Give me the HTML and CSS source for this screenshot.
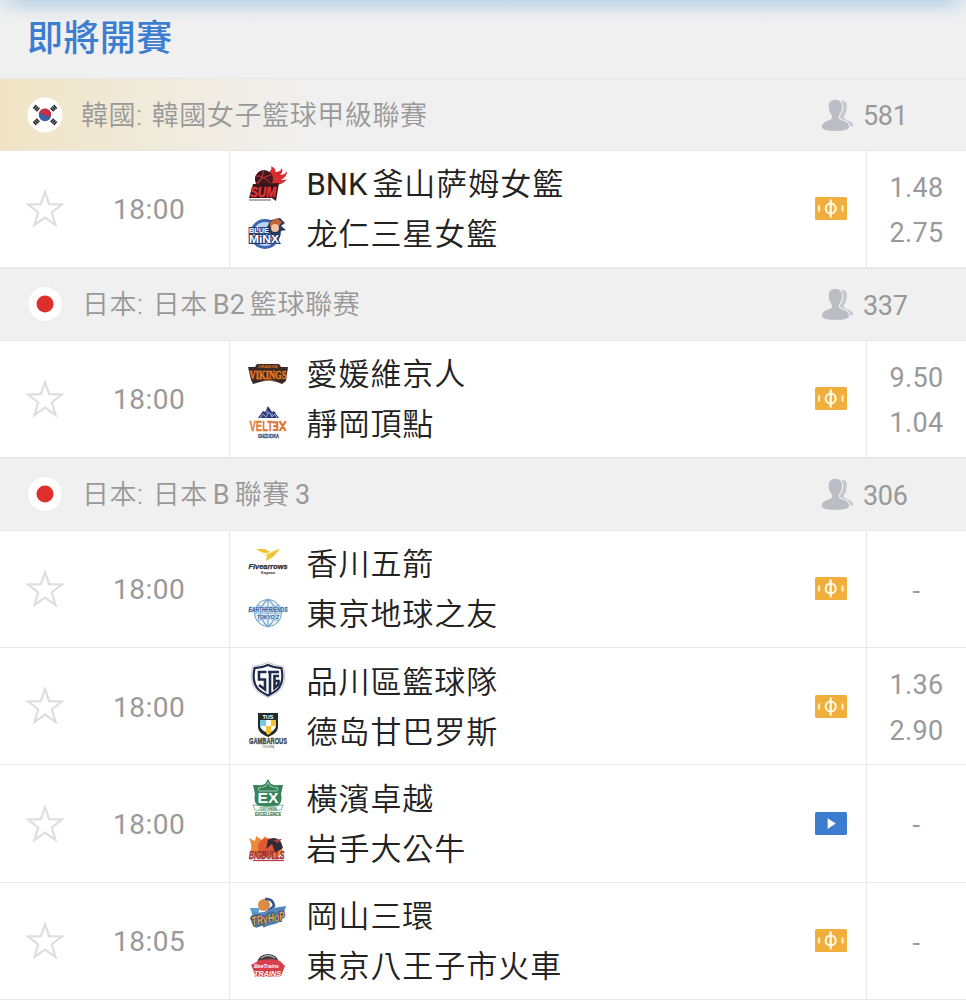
FILE: index.html
```html
<!DOCTYPE html>
<html lang="zh-Hant">
<head>
<meta charset="utf-8">
<title>即將開賽</title>
<link rel="stylesheet" href="styles.css">
</head>
<body>
<svg class="defs" width="0" height="0">
  <symbol id="star" viewBox="0 0 40 40"><path d="M20 3.2 24.2 15.2 37 15.5 26.8 23.3 30.5 36 20 28.6 9.5 36 13.2 23.3 3 15.5 15.8 15.2Z" fill="none" stroke="#dedede" stroke-width="2.2"/></symbol>
  <symbol id="people" viewBox="0 0 34 34">
    <path d="M17 2.500c5 0 8 .8 8.500 3 .8 3 .2 6-.5 8.500-.6 2-2 3.500-2.200 5 0 2 2 2.800 4.200 3.500 3.500 1.200 5.500 3.300 5.500 5.800H20Z" fill="#c6c7cc"/>
    <path d="M14.200 1.200c5 0 7.600 3.200 7.400 7.800-.1 3.800-1 6-2.600 8-.8 1.200-.6 3 .3 3.800 1.300 1.200 3.400 1.400 5.500 2.400 2.600 1.200 4 3.400 3.800 6-.1 2.600-6 4.200-14.200 4.200S.4 31.800.3 29.200c-.1-2.600 1.200-4.800 3.800-6 2.100-1 4.200-1.200 5.500-2.400.9-.8 1-2.600.2-3.800-1.600-2-2.700-4.200-2.800-8-.1-4.600 2.200-7.800 7.200-7.800Z" fill="#bbbdc4" stroke="#f0f0f0" stroke-width="1.200"/>
  </symbol>
  <symbol id="money" viewBox="0 0 32 23">
    <rect width="32" height="23" rx="1.500" fill="#f0ae3c"/>
    <circle cx="15.700" cy="11.500" r="5" fill="none" stroke="#fffbe9" stroke-width="2.100"/>
    <path d="M15.700 2.500v18" stroke="#fffbe9" stroke-width="2.200"/>
    <path d="M4 8.500v6M27.600 8.500v6" stroke="#fff0c4" stroke-width="2.200"/>
  </symbol>
  <symbol id="video" viewBox="0 0 32 23"><rect width="32" height="23" rx="1.500" fill="#3d7dd0"/><path d="M12.600 6.200v10.800l8.200-5.400Z" fill="#fff"/></symbol>
  <symbol id="japan" viewBox="0 0 36 36"><circle cx="18" cy="18" r="17.500" fill="#fff" stroke="#e9e9e9" stroke-width=".8"/><circle cx="18" cy="18" r="8.500" fill="#df2f2c"/></symbol>
</svg>

<main class="board">
  <header class="heading"><h1>即將開賽</h1></header>

  <section class="league featured">
    <svg class="flag" viewBox="0 0 36 36">
      <circle cx="18" cy="18" r="17.500" fill="#fff"/>
      <circle cx="18" cy="18" r="6.200" fill="#3b62a8"/>
      <path d="M12 16.200A6.200 6.200 0 0 1 24.200 18c-2 2.600-4.700 1.500-6.200.2-2-1.600-4.600-1.700-6-2Z" fill="#c62f45"/>
      <g stroke="#2c2c2c" stroke-width="1.700"><path d="m6.300 11.500 3-3.400M7.800 12.900l3-3.400M9.300 14.300l3-3.400M29.700 11.500l-3-3.400M28.200 12.900l-3-3.400M26.700 14.300l-3-3.400M6.300 24.500l3 3.400M7.800 23.100l3 3.400M9.300 21.700l3 3.400M29.700 24.500l-3 3.400M28.200 23.100l-3 3.400M26.700 21.700l-3 3.400"/></g>
    </svg>
    <h2>韓國: 韓國女子籃球甲級聯賽</h2>
    <div class="viewers"><svg><use href="#people"/></svg><span>581</span></div>
  </section>
  <article class="match">
    <div class="when"><svg class="star"><use href="#star"/></svg><time>18:00</time></div>
    <div class="teams">
      <div class="team">
        <svg class="logo" viewBox="0 0 40 40">
          <path d="M8 20C4 10 13 5 21 8c2-1 3-4 2-6 4 2 5 4 4 6 3 0 6-1 7-4 1 3 0 5-2 7 3 0 5-1 7-4 0 5-3 7-6 9 2 0 4 0 6-1-3 4-6 5-10 6Z" fill="#d92c30"/>
          <circle cx="16" cy="15" r="9" fill="#41191c"/>
          <path d="M8 12q8-1 15 8M16 6q-2 9-6 14M9 19q6-7 14-8" fill="none" stroke="#c5373a"/>
          <path d="M5 20 31 19 28 37 24 34 1 34Z" fill="#38171b"/>
          <text x="2" y="32.500" font-size="14" font-weight="900" font-style="italic" fill="#e2353a" stroke="#e2353a" stroke-width=".5" textLength="26" lengthAdjust="spacingAndGlyphs">SUM</text>
          <path d="M1 36h22" stroke="#6b5052" stroke-width="1"/>
        </svg>
        <span><span class="latin">BNK</span><i class="thin"></i>釜山萨姆女籃</span></div>
      <div class="team">
        <svg class="logo" viewBox="0 0 40 40">
          <circle cx="17" cy="20" r="13.500" fill="#b9d4f0" stroke="#3f64b4" stroke-width="3"/>
          <path d="M19 13 23 6l9-2 5 5-4 3 5 4-5 1-1 6-5 2-4-5-6-3Z" fill="#29385d"/>
          <path d="m22 8 7-4 5 4-3 4-9 1Z" fill="#bd6335"/><circle cx="27" cy="14" r="4" fill="#f4c2a0"/>
          <g font-weight="900" stroke="#1f3b73" stroke-width="2" paint-order="stroke" fill="#fff">
            <text x="1" y="19" font-size="8" textLength="20" lengthAdjust="spacingAndGlyphs">BLUE</text>
            <text x="1" y="29" font-size="10.500" textLength="30" lengthAdjust="spacingAndGlyphs">MiNX</text>
          </g>
        </svg>
        <span>龙仁三星女籃</span></div>
    </div>
    <svg class="badge"><use href="#money"/></svg>
    <div class="odds"><span>1.48</span><span>2.75</span></div>
  </article>

  <section class="league">
    <svg class="flag"><use href="#japan"/></svg>
    <h2 class="jp">日本: 日本<i class="thin"></i><span class="latin">B2</span><i class="thin"></i>籃球聯赛</h2>
    <div class="viewers"><svg><use href="#people"/></svg><span>337</span></div>
  </section>
  <article class="match">
    <div class="when"><svg class="star"><use href="#star"/></svg><time>18:00</time></div>
    <div class="teams">
      <div class="team">
        <svg class="logo" viewBox="0 0 40 40">
          <path d="M0 13h7l2-3h22l2 3h7l-2 14-4 3-5-2q-9-3-17 0l-7 2-2-4Z" fill="#3c2b23"/>
          <text x="10" y="14.200" font-size="4" font-weight="900" fill="#d77b32" textLength="20" lengthAdjust="spacingAndGlyphs">ORANGE</text>
          <text x="1.500" y="25" font-family="Liberation Serif" font-size="12" font-weight="900" fill="#e77d27" stroke="#e77d27" stroke-width=".5" textLength="37" lengthAdjust="spacingAndGlyphs">VIKINGS</text>
          <path d="M15 27q6-1.500 11 0" fill="none" stroke="#bd7440"/>
        </svg>
        <span>愛媛維京人</span></div>
      <div class="team">
        <svg class="logo" viewBox="0 0 40 40">
          <path d="m10 14 5-7 2 1 3-6 4 6 2-1 5 7Z" fill="#303b7e"/>
          <path d="m12 14 3-4 3 3 3-5 3 5 3-3 2 4M19 6v4m5-1v4" fill="none" stroke="#a3b6dd" stroke-width=".9"/>
          <text x="1.500" y="27" font-size="14" font-weight="700" fill="#df7938" stroke="#df7938" stroke-width=".3" textLength="23.500" lengthAdjust="spacingAndGlyphs">VELT</text>
          <path d="M24.800 18.300h4.400v7.700h-4.400M25.200 22.100h4M31.500 17.200l6.300 9.800m0-9.800-6.300 9.800" fill="none" stroke="#df7938" stroke-width="2.200"/>
          <text x="10" y="34" font-size="6" font-weight="900" fill="#35416c" stroke="#35416c" stroke-width=".3" textLength="21" lengthAdjust="spacingAndGlyphs">SHIZUOKA</text>
        </svg>
        <span>靜岡頂點</span></div>
    </div>
    <svg class="badge"><use href="#money"/></svg>
    <div class="odds"><span>9.50</span><span>1.04</span></div>
  </article>

  <section class="league">
    <svg class="flag"><use href="#japan"/></svg>
    <h2 class="jp">日本: 日本<i class="thin"></i><span class="latin">B</span><i class="thin"></i>聯賽<i class="thin"></i><span class="latin">3</span></h2>
    <div class="viewers"><svg><use href="#people"/></svg><span>306</span></div>
  </section>
  <article class="match">
    <div class="when"><svg class="star"><use href="#star"/></svg><time>18:00</time></div>
    <div class="teams">
      <div class="team">
        <svg class="logo" viewBox="0 0 40 40">
          <path d="M8 5h9l5 3L32 5l-7 8-7 4 1-5Z" fill="#efc332"/><path d="m10 7 8 4 10-4-10 2Z" fill="#fff2b3"/>
          <text x=".5" y="24.500" font-size="8" font-style="italic" font-weight="900" fill="#292929" stroke="#292929" stroke-width=".25" textLength="39" lengthAdjust="spacingAndGlyphs">Fivearrows</text>
          <text x="13" y="29.500" font-size="4" font-weight="700" fill="#333" textLength="14" lengthAdjust="spacingAndGlyphs">Kagawa</text>
        </svg>
        <span>香川五箭</span></div>
      <div class="team">
        <svg class="logo" viewBox="0 0 40 40">
          <circle cx="20" cy="19" r="13.500" fill="#eaf3f9" stroke="#6d9fc9"/>
          <path d="M20 5v28M7 19h26M9 11q11 5 22 0M9 27q11-5 22 0M20 5q-15 14 0 28M20 5q15 14 0 28" fill="none" stroke="#75a6cd" stroke-width="1.200"/>
          <g font-weight="900" font-style="italic" fill="#2f5f9a" stroke="#c4dbec" stroke-width="1" paint-order="stroke">
            <text x=".5" y="17.500" font-size="7" textLength="39" lengthAdjust="spacingAndGlyphs">EARTHFRIENDS</text>
            <text x="9" y="24.500" font-size="6" textLength="22" lengthAdjust="spacingAndGlyphs">TOKYO Z</text>
          </g>
        </svg>
        <span>東京地球之友</span></div>
    </div>
    <svg class="badge"><use href="#money"/></svg>
    <div class="odds"><span>-</span></div>
  </article>
  <article class="match">
    <div class="when"><svg class="star"><use href="#star"/></svg><time>18:00</time></div>
    <div class="teams">
      <div class="team">
        <svg class="logo" viewBox="0 0 40 40">
          <path d="M20 1.500q8 3.500 15.500 3.500 4 18-4.500 25-4 3.500-11 6.500-7-3-11-6.500Q.5 23 4.500 5q7.500 0 15.500-3.500Z" fill="#fff" stroke="#c2c6cd"/>
          <path d="M20 4q6.500 3 13.500 3.200 3 15-4.500 21.800-3 2.500-9 5.500-6-3-9-5.500Q3.500 22 6.500 7.200 13.500 7 20 4Z" fill="#fff" stroke="#202a4b" stroke-width="2.200"/>
          <path d="M18.500 11H11v7.500h6v10l-6-4.500M22 10v23M20 11h11M31 15h-4.500v12l4-3.500V20H27" fill="none" stroke="#202a4b" stroke-width="2.600"/>
        </svg>
        <span>品川區籃球隊</span></div>
      <div class="team">
        <svg class="logo" viewBox="0 0 40 40">
          <path d="M10 2h20v14q0 6-10 10-10-4-10-10Z" fill="#202b2e"/>
          <path d="M12 9h6v6h-6Z" fill="#77c8e2"/><path d="M18 9h5v6h-5ZM12 15h6v6q-5-2-6-6ZM23 15h5q-1 4-5 6Z" fill="#fff"/><path d="M23 9h5v6h-5ZM18 15h5v7l-3 2-2-2Z" fill="#f2c435"/>
          <text x="14.500" y="7.800" font-size="5.500" font-weight="900" fill="#fff" textLength="11" lengthAdjust="spacingAndGlyphs">TUS</text>
          <text x="1" y="33" font-size="8.500" font-weight="900" fill="#39413f" stroke="#39413f" stroke-width=".3" textLength="38" lengthAdjust="spacingAndGlyphs">GAMBAROUS</text>
          <text x="14" y="37" font-size="3" fill="#555" textLength="12" lengthAdjust="spacingAndGlyphs">TOKUSHIMA</text>
        </svg>
        <span>德岛甘巴罗斯</span></div>
    </div>
    <svg class="badge"><use href="#money"/></svg>
    <div class="odds"><span>1.36</span><span>2.90</span></div>
  </article>
  <article class="match">
    <div class="when"><svg class="star"><use href="#star"/></svg><time>18:00</time></div>
    <div class="teams">
      <div class="team">
        <svg class="logo" viewBox="0 0 40 40">
          <path d="m20 0 3 5q5 2 7 1l5 0-2 9q2 9-4 12l-9 3-9-3q-6-3-4-12L5 6l5 0q2 1 7-1Z" fill="#36825a"/>
          <path d="m20 3 2 4q5 2 8 2l-1 3H11l-1-3q3 0 8-2Z" fill="none" stroke="#b3d7c1" stroke-width=".8"/>
          <path d="M5 26q15 3 30 0l-2 5q-13 2-26 0Z" fill="#fff" stroke="#69a181" stroke-width=".8"/>
          <text x="9.500" y="23.500" font-size="14" font-weight="700" fill="#fff" textLength="21" lengthAdjust="spacingAndGlyphs">EX</text>
          <text x="11" y="30.500" font-size="3" font-weight="700" fill="#397d58" textLength="18" lengthAdjust="spacingAndGlyphs">YOKOHAMA</text>
          <text x="7" y="36.500" font-size="5" font-weight="900" fill="#397d58" stroke="#397d58" stroke-width=".2" textLength="26" lengthAdjust="spacingAndGlyphs">EXCELLENCE</text>
        </svg>
        <span>橫濱卓越</span></div>
      <div class="team">
        <svg class="logo" viewBox="0 0 40 40">
          <path d="M3 21Q4 14 1 9l6 3 1-5 6 4 3-4 3 4q9-2 13 5l2 7-5 5H8Z" fill="#ec8a39"/>
          <circle cx="19" cy="18" r="9" fill="#e05835"/>
          <path d="M20 11q7-5 13 2l2 6-8 5-3-9-6 5Z" fill="#322b36"/><path d="m25 11 9-1-4 4Z" fill="#b33947"/>
          <text x="1" y="30" font-size="11" font-weight="900" font-style="italic" fill="#c93542" stroke="#6d2637" stroke-width=".5" textLength="35.500" lengthAdjust="spacingAndGlyphs">BIGBULLS</text>
          <path d="M5 31.500h31" stroke="#bd3742" stroke-width="1.200"/>
        </svg>
        <span>岩手大公牛</span></div>
    </div>
    <svg class="badge"><use href="#video"/></svg>
    <div class="odds"><span>-</span></div>
  </article>
  <article class="match">
    <div class="when"><svg class="star"><use href="#star"/></svg><time>18:05</time></div>
    <div class="teams">
      <div class="team">
        <svg class="logo" viewBox="0 0 40 40">
          <circle cx="16" cy="9" r="6" fill="#dc8b45"/><path d="M17 3q8-1 9 7l-6 5" fill="none" stroke="#365491" stroke-width="2.500"/>
          <path d="M2 12h10l-3 8-4 1Z" fill="#5aa2d6"/>
          <path d="m2 22 4-5 10-1 9-4 13-2-4 14-15 4-11 4-4-4Z" fill="#5486bd"/>
          <text x="3" y="27" transform="rotate(-10 20 22)" font-size="13" font-weight="900" font-style="italic" fill="#dfa64b" stroke="#354871" stroke-width="2" paint-order="stroke" textLength="34" lengthAdjust="spacingAndGlyphs">TRyHoP</text>
          <path d="m15 30 15-4" stroke="#4d7eb8" stroke-width="2"/>
        </svg>
        <span>岡山三環</span></div>
      <div class="team">
        <svg class="logo" viewBox="0 0 40 40">
          <path d="M9 18Q10 8 20 8t11 10Z" fill="#424047"/><path d="M13 12q7-5 14 0" fill="none" stroke="#aeaaaf" stroke-width="1.500"/>
          <path d="m3 19 9-5 12-1 8 2 5 5-4 10H8Z" fill="#d5404a"/>
          <g font-weight="900" font-style="italic" fill="#fff"><text x="6" y="21.500" font-size="6" textLength="25" lengthAdjust="spacingAndGlyphs">BeeTrains</text>
          <text x="6" y="29.500" font-size="7" stroke="#d23846" stroke-width="1.200" paint-order="stroke" textLength="27" lengthAdjust="spacingAndGlyphs">TRAINS</text></g>
        </svg>
        <span>東京八王子市火車</span></div>
    </div>
    <svg class="badge"><use href="#money"/></svg>
    <div class="odds"><span>-</span></div>
  </article>
</main>
</body>
</html>
```
FILE: styles.css
```css
* { box-sizing: border-box; }
body { margin: 0; background: #fff; overflow: hidden; font-family: Roboto, "Noto Sans CJK TC", sans-serif; color: #222; }
.defs { position: absolute; }
.board { width: 966px; height: 1000px; display: flex; flex-direction: column; }
.heading {
  height: 78.3px; flex: none; padding: 0 27px;
  background: linear-gradient(90deg, #f0f0f0b0 0, #f0f0f000 24px calc(100% - 24px), #f0f0f0b0 100%) top / 100% 24px no-repeat,
    linear-gradient(#c3d8e8 0, #cbdce9 5px, #e4eaee 13px, #f0f0f0 23px);
}
h1 { margin: 0; font-size: 36px; line-height: 79px; font-weight: 500; letter-spacing: .4px; color: #3d7dd0; }
.league {
  height: 72.5px; flex: none; display: flex; align-items: center; padding-left: 27px;
  background: #f0f0f0; border-top: 1px solid #e7e7e7; border-bottom: 1px solid #e7e7e7;
}
.featured { background: linear-gradient(90deg, #f1e4c4 0, #f0e9d7 120px, #f0f0f0 310px); }
.flag { width: 36px; height: 36px; flex: none; }
h2 { flex: 1; margin: 0 0 0 18px; padding-top: 2px; font-size: 27px; line-height: 40px; font-weight: 350; letter-spacing: .6px; word-spacing: 2px; color: #999; white-space: nowrap; }
.jp { padding-left: 1px; }
.latin { font-weight: 400; letter-spacing: 0; }
.thin { display: inline-block; width: 5px; }
.viewers { width: 145px; display: flex; align-items: center; gap: 8px; font-size: 27px; letter-spacing: -.3px; color: #999; }
.viewers span { padding-top: 3px; }
.viewers svg { width: 34px; height: 34px; }
.match { height: 117.4px; flex: none; display: grid; grid-template-columns: 230px 1fr 51px 100px; align-items: center; border-bottom: 1px solid #e7e7e7; }
.when { height: 100%; display: flex; align-items: center; border-right: 1px solid #e7e7e7; padding-left: 25px; gap: 48px; }
.star { width: 40px; height: 40px; }
time { font-size: 28px; letter-spacing: .5px; color: #999; padding-top: 2px; }
.teams { display: grid; grid-template-rows: 50px 50px; padding-left: 18px; }
.team { display: flex; align-items: center; gap: 18.5px; font-size: 31px; letter-spacing: .95px; white-space: nowrap; font-weight: 350; line-height: 50px; }
.team > span { padding-top: 3px; }
.logo { width: 40px; height: 40px; flex: none; overflow: visible; font-family: "Liberation Sans", sans-serif; letter-spacing: 0; line-height: 1; }
.badge { width: 32px; height: 23px; }
.odds { height: 100%; display: flex; flex-direction: column; align-items: center; justify-content: center; border-left: 1px solid #e7e7e7; font-size: 27px; line-height: 45.500px; letter-spacing: .3px; color: #999; padding-top: 5px; }
```
